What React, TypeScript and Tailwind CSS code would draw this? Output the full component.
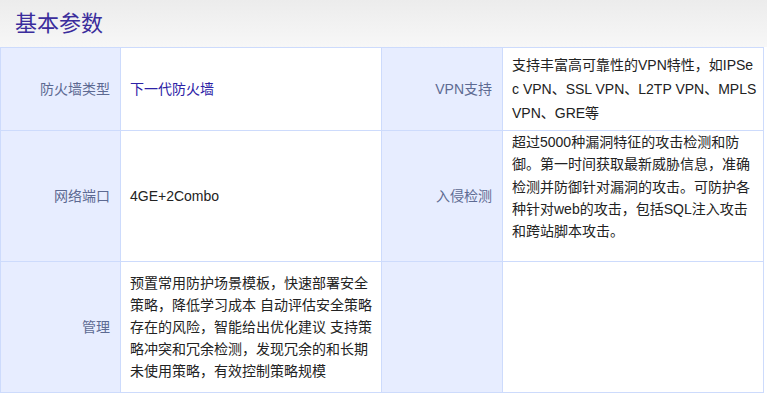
import React from 'react';

const FONT = { fontFamily: '"Liberation Sans", "Noto Sans CJK SC", sans-serif' };

function Lines({ lines, className = '' }: { lines: string[]; className?: string }) {
  return (
    <div className={className}>
      {lines.map((l, i) => (
        <div key={i} className="whitespace-nowrap">{l}</div>
      ))}
    </div>
  );
}

const labelCls =
  'bg-[#e7edff] border-r border-b border-[#cddbfc] flex items-center justify-end pr-[10px] text-[14px] text-[#5d6a92]';
const valueCls = 'bg-white border-r border-b border-[#cddbfc] flex pl-[9px] pr-[2px] text-[14px]';

export default function App() {
  return (
    <div className="w-[767px] h-[394px] bg-white overflow-hidden" style={FONT}>
      <div className="h-[47px] flex items-center pl-[15px] bg-gradient-to-b from-[#ececec] to-[#f7f7f7]">
        <h2 className="text-[22px] leading-none text-[#3b2d9c]">基本参数</h2>
      </div>

      <div className="w-[764px] border-l border-t border-[#cddbfc] grid grid-cols-[120px_261px_121px_261px] grid-rows-[83px_131px_131px]">
        {/* row 1 */}
        <div className={labelCls}>防火墙类型</div>
        <div className={`${valueCls} items-center text-[#2d22a6]`}>下一代防火墙</div>
        <div className={labelCls}>VPN支持</div>
        <div className={`${valueCls} items-center text-[#222]`}>
          <Lines
            className="leading-6"
            lines={['支持丰富高可靠性的VPN特性，如IPSe', 'c VPN、SSL VPN、L2TP VPN、MPLS', 'VPN、GRE等']}
          />
        </div>

        {/* row 2 */}
        <div className={labelCls}>网络端口</div>
        <div className={`${valueCls} items-center text-[#222]`}>4GE+2Combo</div>
        <div className={labelCls}>入侵检测</div>
        <div className={`${valueCls} items-start text-[#222]`}>
          <Lines
            className="leading-[22.3px]"
            lines={[
              '超过5000种漏洞特征的攻击检测和防',
              '御。第一时间获取最新威胁信息，准确',
              '检测并防御针对漏洞的攻击。可防护各',
              '种针对web的攻击，包括SQL注入攻击',
              '和跨站脚本攻击。',
            ]}
          />
        </div>

        {/* row 3 */}
        <div className={labelCls}>管理</div>
        <div className={`${valueCls} items-center text-[#222]`}>
          <Lines
            className="leading-[22px]"
            lines={[
              '预置常用防护场景模板，快速部署安全',
              '策略，降低学习成本 自动评估安全策略',
              '存在的风险，智能给出优化建议 支持策',
              '略冲突和冗余检测，发现冗余的和长期',
              '未使用策略，有效控制策略规模',
            ]}
          />
        </div>
        <div className={labelCls}></div>
        <div className={valueCls}></div>
      </div>
    </div>
  );
}
